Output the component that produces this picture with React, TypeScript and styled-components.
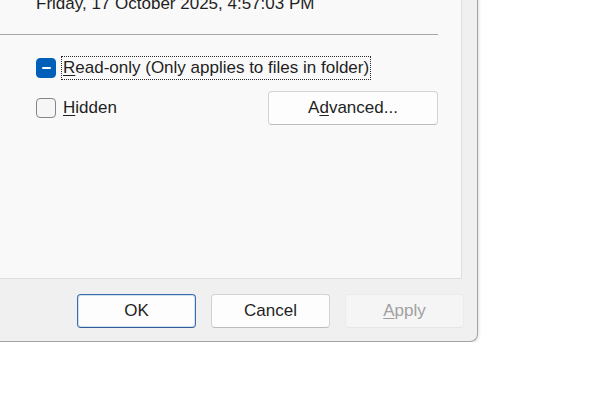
import styled, { createGlobalStyle } from "styled-components"

const GlobalStyle = createGlobalStyle`
    html, body {
        margin: 0;
        padding: 0;
        background: #ffffff;
        overflow: hidden;
    }
    body {
        font-family: "Liberation Sans", Arial, sans-serif;
        font-size: 17px;
        color: #1f1f1f;
    }
`

const Dialog = styled.div`
    box-sizing: border-box;
    margin: -30px 0 0 -24px;
    width: 502px;
    height: 372px;
    display: flex;
    flex-direction: column;
    padding: 0 15px 0 4px;
    background: #f0f0f0;
    border-right: 1px solid #a4a4a4;
    border-bottom: 1px solid #a4a4a4;
    border-bottom-right-radius: 8px;
    box-shadow: 1px 1px 3px rgba(0, 0, 0, 0.12);
`

const Panel = styled.div`
    flex: 1;
    box-sizing: border-box;
    background: #f9f9f9;
    border: 1px solid #dedede;
    padding: 23px 23px 0 17px;
    display: flex;
    flex-direction: column;
`

const InfoLine = styled.div`
    margin-left: 38px;
    height: 20px;
    line-height: 20px;
    white-space: nowrap;
`

const Separator = styled.div`
    margin-top: 20px;
    height: 1px;
    background: #a6a6a6;
`

const Row = styled.div<{ top: number; height: number }>`
    display: flex;
    align-items: center;
    justify-content: space-between;
    margin: ${props => props.top}px 0 0 38px;
    height: ${props => props.height}px;
`

const CheckLabel = styled.label`
    display: flex;
    align-items: center;
    gap: 5px;
`

const Box = styled.span<{ checked?: boolean }>`
    box-sizing: border-box;
    width: 20px;
    height: 20px;
    border-radius: 4px;
    display: flex;
    align-items: center;
    justify-content: center;
    background: ${props => props.checked ? "#005fb8" : "#f6f6f6"};
    border: 1px solid ${props => props.checked ? "#005fb8" : "#858585"};
`

const Dash = styled.span`
    width: 9px;
    height: 2px;
    border-radius: 1px;
    background: #ffffff;
`

const LabelText = styled.span<{ focused?: boolean }>`
    line-height: 22px;
    padding: 0 1px;
    white-space: nowrap;
    border: 1px dotted ${props => props.focused ? "#2a2a2a" : "transparent"};
`

const Key = styled.span`
    text-decoration: underline;
    text-underline-offset: 2px;
`

const Button = styled.button<{ variant?: "default" | "disabled" }>`
    box-sizing: border-box;
    height: 34px;
    font-family: inherit;
    font-size: 17px;
    border-radius: 4px;
    padding: 0;
    color: ${props => props.variant === "disabled" ? "#a0a0a0" : "#1f1f1f"};
    background: ${props => props.variant === "disabled" ? "#f5f5f5" : "#fdfdfd"};
    border: 1px solid ${props =>
        props.variant === "default" ? "#3b6ea8" : props.variant === "disabled" ? "#ebebeb" : "#d3d3d3"};
    border-bottom-color: ${props =>
        props.variant === "default" ? "#2f5f96" : props.variant === "disabled" ? "#e6e6e6" : "#bcbcbc"};
    box-shadow: ${props => props.variant === "default" ? "inset 0 0 0 1px rgba(0, 95, 184, 0.18)" : "none"};
`

const AdvancedButton = styled(Button)`
    width: 170px;
`

const Footer = styled.div`
    height: 62px;
    box-sizing: border-box;
    padding-top: 15px;
    display: flex;
    justify-content: flex-end;
    gap: 15px;
    margin-right: -2px;
`

const FooterButton = styled(Button)`
    width: 119px;
`

export default function App() {
    return <>
        <GlobalStyle/>
        <Dialog>
            <Panel>
                <InfoLine>Friday, 17 October 2025, 4:57:03 PM</InfoLine>
                <Separator/>
                <Row top={21} height={24}>
                    <CheckLabel>
                        <Box checked><Dash/></Box>
                        <LabelText focused><Key>R</Key>ead-only (Only applies to files in folder)</LabelText>
                    </CheckLabel>
                </Row>
                <Row top={11} height={34}>
                    <CheckLabel>
                        <Box/>
                        <LabelText><Key>H</Key>idden</LabelText>
                    </CheckLabel>
                    <AdvancedButton>A<Key>d</Key>vanced...</AdvancedButton>
                </Row>
            </Panel>
            <Footer>
                <FooterButton variant="default">OK</FooterButton>
                <FooterButton>Cancel</FooterButton>
                <FooterButton variant="disabled"><Key>A</Key>pply</FooterButton>
            </Footer>
        </Dialog>
    </>
}
